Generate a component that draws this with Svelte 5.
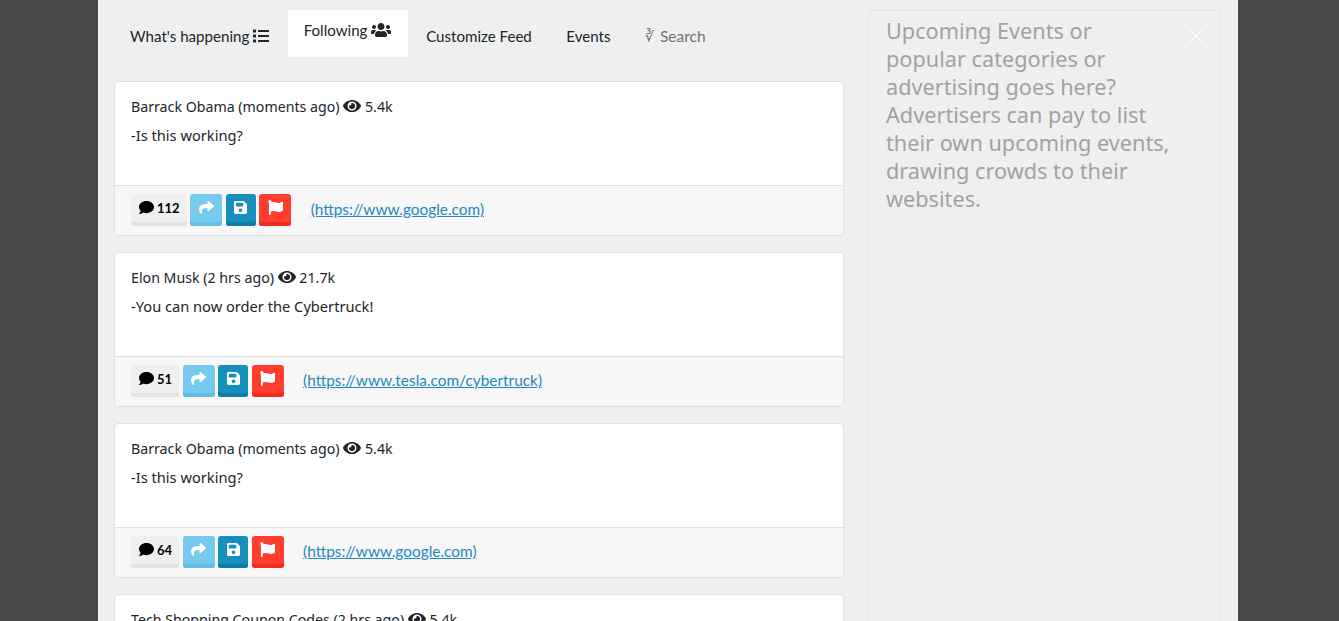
<script>
    const paths = {
        list: 'M80 368H16a16 16 0 0 0-16 16v64a16 16 0 0 0 16 16h64a16 16 0 0 0 16-16v-64a16 16 0 0 0-16-16zm0-320H16A16 16 0 0 0 0 64v64a16 16 0 0 0 16 16h64a16 16 0 0 0 16-16V64a16 16 0 0 0-16-16zm0 160H16a16 16 0 0 0-16 16v64a16 16 0 0 0 16 16h64a16 16 0 0 0 16-16v-64a16 16 0 0 0-16-16zm416 176H176a16 16 0 0 0-16 16v32a16 16 0 0 0 16 16h320a16 16 0 0 0 16-16v-32a16 16 0 0 0-16-16zm0-320H176a16 16 0 0 0-16 16v32a16 16 0 0 0 16 16h320a16 16 0 0 0 16-16V80a16 16 0 0 0-16-16zm0 160H176a16 16 0 0 0-16 16v32a16 16 0 0 0 16 16h320a16 16 0 0 0 16-16v-32a16 16 0 0 0-16-16z',
        users: 'M96 224c35.3 0 64-28.7 64-64s-28.7-64-64-64-64 28.7-64 64 28.7 64 64 64zm448 0c35.3 0 64-28.7 64-64s-28.7-64-64-64-64 28.7-64 64 28.7 64 64 64zm32 32h-64c-17.6 0-33.5 7.1-45.1 18.6 40.3 22.1 68.9 62 75.1 109.4h66c17.7 0 32-14.3 32-32v-32c0-35.3-28.7-64-64-64zm-256 0c61.9 0 112-50.1 112-112S381.9 32 320 32 208 82.1 208 144s50.1 112 112 112zm76.8 32h-8.3c-20.8 10-43.9 16-68.5 16s-47.6-6-68.5-16h-8.3C179.6 288 128 339.6 128 403.2V432c0 26.5 21.5 48 48 48h288c26.5 0 48-21.5 48-48v-28.8c0-63.6-51.6-115.2-115.2-115.2zm-223.7-13.4C161.5 263.1 145.6 256 128 256H64c-35.3 0-64 28.7-64 64v32c0 17.7 14.3 32 32 32h65.9c6.3-47.4 34.9-87.3 75.2-109.4z',
        eye: 'M572.52 241.4C518.29 135.59 410.93 64 288 64S57.68 135.64 3.48 241.41a32.35 32.35 0 0 0 0 29.19C57.71 376.41 165.07 448 288 448s230.32-71.64 284.52-177.41a32.35 32.35 0 0 0 0-29.19zM288 400a144 144 0 1 1 144-144 143.93 143.93 0 0 1-144 144zm0-240a95.31 95.31 0 0 0-25.31 3.79 47.85 47.85 0 0 1-66.9 66.9A95.78 95.78 0 1 0 288 160z',
        comment: 'M256 32C114.6 32 0 125.1 0 240c0 49.6 21.4 95 57 130.7C44.5 421.1 2.7 466 2.2 466.5c-2.2 2.3-2.8 5.7-1.5 8.7S4.8 480 8 480c66.3 0 116-31.8 140.6-51.4 32.7 12.3 69 19.4 107.4 19.4 141.4 0 256-93.1 256-208S397.4 32 256 32z',
        share: 'M503.691 189.836L327.687 37.851C312.281 24.546 288 35.347 288 56.015v80.053C127.371 137.907 0 170.1 0 322.326c0 61.441 39.581 122.309 83.333 154.132 13.653 9.931 33.111-2.533 28.077-18.631C66.066 312.814 132.917 274.316 288 272.085V360c0 20.7 24.3 31.453 39.687 18.164l176.004-152c11.071-9.562 11.086-26.753 0-36.328z',
        save: 'M433.941 129.941l-83.882-83.882A48 48 0 0 0 316.118 32H48C21.49 32 0 53.49 0 80v352c0 26.51 21.49 48 48 48h352c26.51 0 48-21.49 48-48V163.882a48 48 0 0 0-14.059-33.941zM224 416c-35.346 0-64-28.654-64-64 0-35.346 28.654-64 64-64s64 28.654 64 64c0 35.346-28.654 64-64 64zm96-304.52V212c0 6.627-5.373 12-12 12H76c-6.627 0-12-5.373-12-12V108c0-6.627 5.373-12 12-12h228.52c3.183 0 6.235 1.264 8.485 3.515l3.48 3.48A11.996 11.996 0 0 1 320 111.48z',
        flag: 'M349.565 98.783C295.978 98.783 251.721 64 184.348 64c-24.955 0-47.309 4.384-68.045 12.013a55.947 55.947 0 0 0 3.586-23.562C118.117 24.015 94.806 1.206 66.338.048 34.345-1.254 8 24.296 8 56c0 19.026 9.497 35.825 24 45.945V488c0 13.255 10.745 24 24 24h16c13.255 0 24-10.745 24-24v-94.4c28.311-12.064 63.582-22.122 114.435-22.122 53.588 0 97.844 34.783 165.217 34.783 48.169 0 86.667-16.294 122.505-40.858C506.84 359.452 512 349.571 512 339.045v-243.1c0-23.393-24.269-38.87-45.485-29.016-34.338 15.948-76.454 31.854-116.95 31.854z'
    }

    const posts = [
        { title: 'Barrack Obama (moments ago)', views: '5.4k', body: '-Is this working?', count: 112, url: 'https://www.google.com' },
        { title: 'Elon Musk (2 hrs ago)', views: '21.7k', body: '-You can now order the Cybertruck!', count: 51, url: 'https://www.tesla.com/cybertruck' },
        { title: 'Barrack Obama (moments ago)', views: '5.4k', body: '-Is this working?', count: 64, url: 'https://www.google.com' },
        { title: 'Tech Shopping Coupon Codes (2 hrs ago)', views: '5.4k', body: '-Is this working?', count: 64, url: 'https://www.google.com' }
    ]
</script>

{#snippet icon(name, w, h, vw = 512)}
    <svg class="icon" width={w} height={h} viewBox="0 0 {vw} 512" fill="currentColor"><path d={paths[name]} /></svg>
{/snippet}

<div class="backdrop">
    <div class="modal">
        <main class="feed">
            <nav class="tabs">
                <a class="tab first" href="#a">What's happening {@render icon('list', 16, 16)}</a>
                <a class="tab active" href="#a">Following {@render icon('users', 20, 16, 640)}</a>
                <a class="tab" href="#a">Customize Feed</a>
                <a class="tab" href="#a">Events</a>
                <a class="tab muted" href="#a"><span class="root">∛</span> Search</a>
            </nav>

            {#each posts as post}
                <article class="card">
                    <div class="card-body">
                        <p class="title">{post.title} {@render icon('eye', 18, 16, 576)} {post.views}</p>
                        <p class="text">{post.body}</p>
                    </div>
                    <div class="card-footer">
                        <button class="btn grey">{@render icon('comment', 15, 15)}<b>{post.count}</b></button>
                        <button class="btn blue">{@render icon('share', 15, 15)}</button>
                        <button class="btn teal">{@render icon('save', 13, 15, 448)}</button>
                        <button class="btn red">{@render icon('flag', 15, 15)}</button>
                        <a class="link" href="#a">({post.url})</a>
                    </div>
                </article>
            {/each}
        </main>

        <aside class="side">
            <svg class="close" width="16" height="16" viewBox="0 0 16 16" stroke="#fff" fill="none"><path d="M1 1l14 14M15 1L1 15" /></svg>
            <p>Upcoming Events or popular categories or advertising goes here? Advertisers can pay to list their own upcoming events, drawing crowds to their websites.</p>
        </aside>
    </div>
</div>

<style>
    :global(body) {
        margin: 0;
        overflow: hidden;
    }

    .backdrop {
        height: 100vh;
        overflow: hidden;
        background: #484848;
        padding-left: 98px;
        font-family: 'Lato', sans-serif;
        font-size: 15.1px;
        color: #212529;
    }

    .modal {
        width: 1140px;
        height: 100%;
        background: #efefef;
        display: flex;
    }

    .feed {
        width: 730px;
        padding: 10px 24px 0 16px;
        flex-shrink: 0;
    }

    .tabs {
        display: flex;
        height: 47px;
        margin-bottom: 24px;
    }

    .tab {
        display: flex;
        align-items: center;
        padding: 4px 16px 0;
        margin-right: 2.5px;
        color: #212529;
        text-decoration: none;
        white-space: pre;
        height: 47px;
        box-sizing: border-box;
    }

    .tab.active {
        background: #fff;
        padding: 0 16px 7px;
        width: 120px;
    }

    .tab.muted {
        color: #6c757d;
        font-size: 15.5px;
    }

    .root {
        font-size: 14px;
        margin-right: 2px;
    }

    .icon {
        flex-shrink: 0;
        vertical-align: -2px;
    }

    .card {
        height: 155px;
        box-sizing: border-box;
        margin-bottom: 16px;
        background: #fff;
        border: 1px solid #dfdfdf;
        border-radius: 4px;
        display: flex;
        flex-direction: column;
        overflow: hidden;
    }

    .card-body {
        flex: 1;
        padding: 13px 16px 0;
    }

    .title,
    .text {
        margin: 0;
        font-family: 'Noto Sans', sans-serif;
        font-size: 14.2px;
        line-height: 24px;
    }

    .title {
        margin-bottom: 4px;
    }

    .text {
        font-size: 14.65px;
    }

    .card-footer {
        height: 50px;
        box-sizing: border-box;
        background: #f7f7f7;
        border-top: 1px solid #dfdfdf;
        display: flex;
        align-items: center;
        gap: 3.5px;
        padding: 0 16px 2px;
    }

    .btn {
        height: 32px;
        min-width: 30px;
        padding: 0 0 4px;
        margin: 0;
        box-sizing: border-box;
        display: flex;
        align-items: center;
        justify-content: center;
        border: 0;
        border-radius: 3px;
        color: #fff;
        font-family: 'Lato', sans-serif;
        font-size: 13px;
    }

    .btn.grey {
        background: #efefef;
        color: #000;
        box-shadow: inset 0 -4px 0 #e2e2e2;
        padding: 0 7px 4px 8px;
        gap: 3px;
    }

    .btn.blue {
        background: #75caee;
        box-shadow: inset 0 -4px 0 #65bde3;
        width: 32px;
    }

    .btn.teal {
        background: #168fbd;
        box-shadow: inset 0 -4px 0 #117ca5;
        width: 30px;
    }

    .btn.red {
        background: #ff3d2e;
        box-shadow: inset 0 -4px 0 #f02e20;
        width: 32px;
    }

    .link {
        margin: 0 0 2px 16px;
        color: #2389bd;
        font-size: 15.4px;
    }

    .side {
        position: relative;
        width: 353px;
        height: 100%;
        margin-top: 10px;
        box-sizing: border-box;
        padding: 6px 47px 0 17px;
        border: 1px solid #e3e3e3;
        border-radius: 4px 4px 0 0;
        color: #a2a2a2;
        font-family: 'Noto Sans', sans-serif;
        font-size: 21.7px;
        line-height: 28px;
    }

    .side p {
        margin: 0;
    }

    .close {
        position: absolute;
        top: 17px;
        right: 16px;
    }
</style>
